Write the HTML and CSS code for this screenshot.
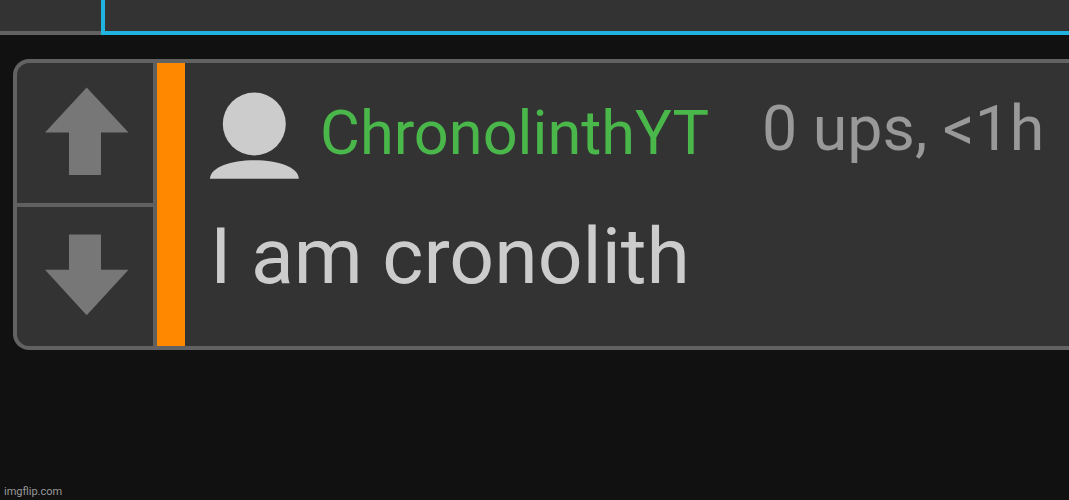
FILE: index.html
```html
<!DOCTYPE html>
<html lang="en">
<head>
<meta charset="utf-8">
<title>Comments</title>
<link rel="stylesheet" href="styles.css">
</head>
<body>
<div class="composer"><div class="composer-side"></div><div class="composer-input"></div></div>
<article class="comment">
  <div class="votes">
    <div class="vote up"><svg width="84" height="88" viewBox="0 0 84 88"><path d="M41.700 .5 83.500 45.500H56V88H24V45.500H0Z"/></svg></div>
    <div class="vote down"><svg width="84" height="82" viewBox="0 0 84 82"><path d="M24 .5H56V35.700H83.500L41.700 81.300 0 35.700H24Z"/></svg></div>
  </div>
  <div class="accent"></div>
  <div class="content">
    <header class="meta">
      <svg class="avatar" width="89" height="87" viewBox="0 0 89 87"><circle cx="44.300" cy="32" r="31.500"/><path d="M0 86.700V85.500C2 75 20 68.200 44.500 68.200S87 75 88.700 85.500V86.700Z"/></svg>
      <span class="name">ChronolinthYT</span>
      <span class="stats">0 ups, &lt;1h</span>
    </header>
    <p class="message">I am cronolith</p>
  </div>
</article>
<footer class="watermark">imgflip.com</footer>
</body>
</html>
```
FILE: styles.css
```css
* { box-sizing: border-box; }
body { margin: 0; width: 1069px; height: 500px; overflow: hidden; background: #111; font-family: Roboto, sans-serif; display: flex; flex-direction: column; }
.composer { display: flex; height: 35px; flex: none; }
.composer-side { width: 101px; background: #333; border-bottom: 4px solid #626262; }
.composer-input { flex: 1; background: #333; border-left: 4px solid #21b2e0; border-bottom: 4px solid #21b2e0; }
.comment { display: flex; flex: none; width: 1056px; height: 291px; margin: 24px 0 0 13px; background: #333; border: 4px solid #626262; border-right: 0; border-radius: 16px 0 0 16px; }
.votes { width: 140px; border-right: 4px solid #606060; display: flex; flex-direction: column; }
.vote { padding-left: 28px; fill: #777; }
.vote svg { display: block; }
.up { height: 144px; padding-top: 24px; border-bottom: 4px solid #606060; }
.down { padding-top: 27px; }
.accent { width: 28px; background: #ff8800; }
.content { flex: 1; padding: 29px 0 0 25px; white-space: nowrap; }
.meta { display: flex; height: 88px; }
.avatar { flex: none; fill: #ccc; }
.name { width: 463px; padding-left: 21px; color: #4ab74a; font-size: 61.3px; line-height: 82px; }
.stats { color: #999; font-size: 62.7px; line-height: 74px; }
.message { margin: 29px 0 0; color: #ccc; font-size: 78.7px; line-height: 94px; }
.watermark { margin: auto 0 2px 4px; color: #999; font-size: 11px; line-height: 13px; }
```
